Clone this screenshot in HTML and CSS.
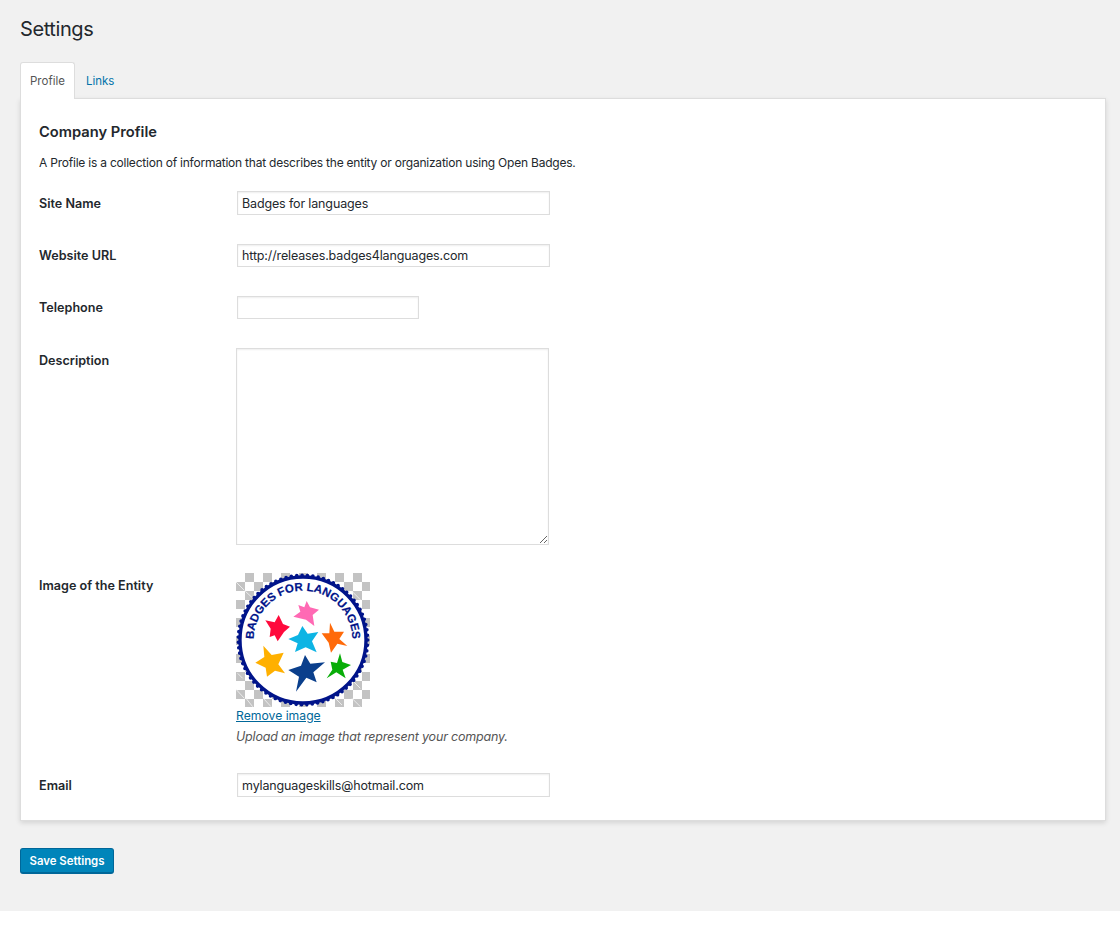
FILE: index.html
```html
<!DOCTYPE html>
<html lang="en">
<head>
<meta charset="utf-8">
<title>Settings</title>
<link rel="stylesheet" href="styles.css">
</head>
<body>
<div class="page">
  <h1 class="title">Settings</h1>
  <div class="tabs">
    <a class="tab tab-active" href="#">Profile</a>
    <a class="tab" href="#">Links</a>
  </div>
  <div class="panel">
    <h2 class="heading">Company Profile</h2>
    <p class="intro">A Profile is a collection of information that describes the entity or organization using Open Badges.</p>
    <div class="row row-site">
      <label class="label">Site Name</label>
      <input class="input input-wide" type="text" value="Badges for languages">
    </div>
    <div class="row row-url">
      <label class="label">Website URL</label>
      <input class="input input-wide input-url" type="text" value="http://releases.badges4languages.com">
    </div>
    <div class="row row-tel">
      <label class="label">Telephone</label>
      <input class="input input-tel" type="text">
    </div>
    <div class="row row-desc">
      <label class="label">Description</label>
      <textarea class="area"></textarea>
    </div>
    <div class="row row-image">
      <label class="label">Image of the Entity</label>
      <div class="image-field">
        <svg class="badge" viewBox="33 24 402 402" xmlns="http://www.w3.org/2000/svg" role="img" aria-label="Badges for Languages badge">
          <defs>
            <pattern id="check" x="33" y="24" width="54" height="54" patternUnits="userSpaceOnUse">
              <rect x="0" y="0" width="54" height="54" fill="#fff"/>
              <rect x="27" y="0" width="27" height="27" fill="#c3c3c3"/>
              <rect x="0" y="27" width="27" height="27" fill="#c3c3c3"/>
            </pattern>
            <path id="arc" d="M86 225 A148 148 0 0 1 382 225"/>
          </defs>
          <rect x="33" y="24" width="402" height="402" fill="url(#check)"/>
          <path d="M38 325L53 340M33 373L58 400M63 400L83 425M115 400L138 425M386 350L406 370M381 400L406 425M331 400L351 420M33 51L58 76M61 79L83 99M381 79L406 104" stroke="#ececec" stroke-width="3" fill="none"/>
          <circle cx="234" cy="225" r="189" fill="#fff" stroke="#00148a" stroke-width="10"/>
          <circle cx="234" cy="225" r="194" fill="none" stroke="#00148a" stroke-width="11" stroke-linecap="round" stroke-dasharray="0 16.25"/>
          <text class="badge-text"><textPath href="#arc" startOffset="50%" text-anchor="middle">BADGES FOR LANGUAGES</textPath></text>
          <polygon fill="#ff69b4" points="245,108 255,127 282,134 263,150 268,183 243,164 205,155 226,140 220,120 238,127"/>
          <polygon fill="#ff0a3c" points="121,166 149,172 161,150 174,177 195,185 177,201 158,229 149,211 134,216 137,191"/>
          <polygon fill="#0db4e4" points="232,183 248,206 280,201 261,229 275,262 242,247 210,261 218,235 190,222 219,210"/>
          <polygon fill="#ff6a0a" points="315,173 328,200 357,200 343,222 367,243 337,236 318,263 311,233 290,205 313,205"/>
          <polygon fill="#ffb000" points="115,242 140,270 176,263 160,298 180,325 150,317 126,335 122,308 91,293 118,276"/>
          <polygon fill="#0a3f8c" points="240,270 256,296 300,292 265,322 275,352 244,338 213,380 222,335 190,315 228,302"/>
          <polygon fill="#08ad08" points="345,265 352,291 378,300 353,314 362,340 334,322 305,340 322,314 317,290 336,294"/>
        </svg>
        <a class="remove" href="#">Remove image</a>
        <p class="hint">Upload an image that represent your company.</p>
      </div>
    </div>
    <div class="row row-email">
      <label class="label">Email</label>
      <input class="input input-wide" type="text" value="mylanguageskills@hotmail.com">
    </div>
  </div>
  <button class="save" type="button">Save Settings</button>
</div>
</body>
</html>
```
FILE: styles.css
```css
* { box-sizing: border-box; }
html, body { margin: 0; background: #fff; }
body { font-family: Inter, "Noto Sans", sans-serif; font-size: 13px; color: #23282d; }
.page { background: #f1f1f1; height: 911px; padding: 17px 14px 0 20px; }
.title { margin: 0 0 21px; font-size: 20px; line-height: 24px; font-weight: 400; letter-spacing: -0.4px; color: #23282d; }
.tabs { display: flex; height: 37px; position: relative; z-index: 1; }
.tab { display: block; padding: 0 11px; line-height: 38px; font-size: 11.5px; color: #0073aa; text-decoration: none; }
.tab-active { background: #fff; color: #555; border: 1px solid #ddd; border-bottom: 0; border-radius: 3px 3px 0 0; padding: 0 9px; line-height: 36px; }
.panel { background: #fff; border: 1px solid #ddd; box-shadow: 0 2px 5px rgba(0,0,0,.12); margin-top: -1px; height: 723px; padding: 0 18px; }
.heading { margin: 24px 0 0; font-size: 14.7px; line-height: 18px; font-weight: 600; color: #23282d; }
.intro { margin: 13px 0 0; font-size: 12px; line-height: 18px; letter-spacing: -0.22px; }
.row { display: flex; align-items: flex-start; }
.label { width: 198px; flex: none; font-size: 12.6px; font-weight: 600; line-height: 18px; color: #23282d; }
.row-site { margin-top: 19px; }
.row-url { margin-top: 29px; }
.row-tel { margin-top: 29px; }
.row-desc { margin-top: 29px; }
.row-image { margin-top: 28px; }
.row-email { margin-top: 27px; }
.row-site .label { padding-top: 4px; }
.row-url .label, .row-tel .label { padding-top: 3px; }
.row-desc .label { padding-top: 4px; margin-right: -1px; }
.row-image .label { padding-top: 4px; margin-right: -1px; }
.row-email .label { padding-top: 4px; }
.input { display: block; height: 24px; padding: 0 4px; border: 1px solid #ddd; background: #fff; box-shadow: inset 0 1px 2px rgba(0,0,0,.07); font: 12.5px Inter, "Noto Sans", sans-serif; letter-spacing: -0.14px; color: #23282d; outline: 0; }
.input-wide { width: 313px; }
.input-url { height: 23px; }
.input-tel { width: 182px; height: 23px; }
.area { display: block; width: 313px; height: 197px; border: 1px solid #ddd; background: #fff; box-shadow: inset 0 1px 2px rgba(0,0,0,.07); outline: 0; padding: 2px 6px; }
.image-field { display: flex; flex-direction: column; align-items: flex-start; }
.badge { display: block; width: 134px; height: 134px; }
.remove { margin-top: 1px; font-size: 12.2px; line-height: 16px; color: #006799; }
.hint { margin: 4px 0 0; font-size: 12.5px; line-height: 18px; font-style: italic; letter-spacing: -0.18px; color: #555; }
.save { display: block; margin-top: 27px; width: 94px; height: 26px; padding: 0; background: #0085ba; border: 1px solid #006799; border-bottom-width: 2px; border-radius: 3px; color: #fff; font: 600 11.4px Inter, "Noto Sans", sans-serif; }
.badge-text { font-family: "Liberation Sans", Arial, sans-serif; font-weight: 700; font-size: 34.5px; fill: #00148a; stroke: #00148a; stroke-width: 0.6px; }
```
